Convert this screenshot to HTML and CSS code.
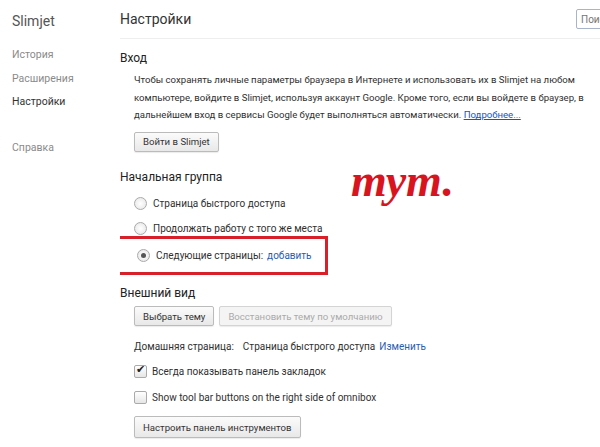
FILE: index.html
```html
<!DOCTYPE html>
<html lang="ru">
<head>
    <meta charset="UTF-8">
    <title>Настройки</title>
    <link rel="stylesheet" href="styles.css">
</head>
<body>
    <div class="page">
        <div class="sidebar">
            <div class="brand">Slimjet</div>
            <ul class="nav">
                <li>История</li>
                <li>Расширения</li>
                <li class="active">Настройки</li>
                <li class="help">Справка</li>
            </ul>
        </div>

        <div class="main">
            <div class="header">
                <h1>Настройки</h1>
                <input class="search" type="text" placeholder="Поиск настроек">
            </div>

            <div class="section">
                <h3>Вход</h3>
                <div class="body">
                    <p class="intro">Чтобы сохранять личные параметры браузера в Интернете и использовать их в Slimjet на любом компьютере, войдите в Slimjet, используя аккаунт Google. Кроме того, если вы войдете в браузер, в дальнейшем вход в сервисы Google будет выполняться автоматически. <a href="#" class="link">Подробнее...</a></p>
                    <button>Войти в Slimjet</button>
                </div>
            </div>

            <div class="section startup">
                <h3>Начальная группа</h3>
                <div class="body">
                    <label class="opt"><span class="radio"></span>Страница быстрого доступа</label>
                    <label class="opt"><span class="radio"></span>Продолжать работу с того же места</label>
                    <label class="opt marked"><span class="radio on"></span>Следующие страницы: <a href="#" class="action">добавить</a></label>
                </div>
                <div class="note">тут.</div>
            </div>

            <div class="section">
                <h3>Внешний вид</h3>
                <div class="body">
                    <div class="buttons">
                        <button>Выбрать тему</button>
                        <button disabled>Восстановить тему по умолчанию</button>
                    </div>
                    <div class="home">
                        <span>Домашняя страница:</span>
                        <span class="home-value">Страница быстрого доступа</span>
                        <a href="#" class="action">Изменить</a>
                    </div>
                    <label class="opt check-row"><span class="check on"></span>Всегда показывать панель закладок</label>
                    <label class="opt check-row"><span class="check"></span>Show tool bar buttons on the right side of omnibox</label>
                    <button class="tools">Настроить панель инструментов</button>
                </div>
            </div>
        </div>
    </div>
</body>
</html>
```

FILE: styles.css
```css
body {
    margin: 0;
    font-family: Roboto, "Noto Sans", sans-serif;
    font-size: 10px;
    color: #303030;
    background: #fff;
    overflow: hidden;
}
.page {
    display: flex;
    height: 447px;
}
.sidebar {
    width: 120px;
    flex-shrink: 0;
    padding-left: 12px;
    box-sizing: border-box;
}
.brand {
    font-size: 14px;
    color: #555;
    padding-top: 13px;
    height: 30px;
}
.nav {
    list-style: none;
    margin: 0;
    padding: 0;
}
.nav li {
    color: #8a8a8a;
    height: 23.5px;
    line-height: 23px;
    font-size: 10.5px;
}
.nav li.active { color: #333; }
.nav li.help { margin-top: 22px; }
.main {
    flex: 1;
    min-width: 0;
    overflow: hidden;
}
.header {
    display: flex;
    justify-content: space-between;
    align-items: center;
    height: 38px;
    border-bottom: 1px solid #eee;
}
h1 {
    margin: 0;
    font-size: 14px;
    font-weight: normal;
    color: #333;
}
.search {
    width: 120px;
    margin-right: -96px;
    height: 20px;
    box-sizing: border-box;
    border: 1px solid #aab4c8;
    border-radius: 2px;
    font: inherit;
    padding: 0 4px;
    color: #999;
}
.section {
    position: relative;
    padding-top: 12px;
}
h3 {
    margin: 0;
    font-size: 12px;
    font-weight: normal;
    color: #222;
}
.body {
    padding-left: 14px;
}
.intro {
    margin: 6px 0 8px;
    line-height: 17.5px;
    width: 452px;
    font-size: 9.6px;
}
.link { color: #15c; }
.action {
    color: #2a5db0;
    text-decoration: none;
    margin-left: 4px;
}
button {
    font: inherit;
    font-size: 9.6px;
    color: #333;
    background: linear-gradient(#fbfbfb, #e8e8e8);
    border: 1px solid #bbb;
    border-radius: 2px;
    height: 20px;
    padding: 0 8px;
    box-shadow: 0 1px 1px rgba(0,0,0,0.08);
}
button:disabled {
    color: #aaa;
    border-color: #d4d4d4;
    background: #f4f4f4;
}
.opt {
    display: flex;
    align-items: center;
    height: 25px;
}
.radio {
    width: 11px;
    height: 11px;
    border: 1px solid #aaa;
    border-radius: 50%;
    background: radial-gradient(#fff, #e4e4e4);
    margin: 0 6px 0 0;
    position: relative;
}
.radio.on::after {
    content: "";
    position: absolute;
    left: 3px;
    top: 3px;
    width: 5px;
    height: 5px;
    border-radius: 50%;
    background: #555;
}
.startup { padding-top: 18.5px; }
.startup h3 { margin-bottom: 7px; }
.marked {
    box-sizing: border-box;
    margin-left: -24px;
    padding-left: 24px;
    width: 218px;
    height: 39px;
    border: 3px solid #d8202a;
    margin-top: -5px;
    margin-bottom: -1px;
}
.note {
    position: absolute;
    left: 231px;
    top: 2px;
    font-family: "Liberation Serif", serif;
    font-style: italic;
    font-weight: bold;
    font-size: 46px;
    color: #d8141e;
}
.buttons {
    display: flex;
    gap: 5px;
    margin-top: 6px;
}
.home {
    margin: 15px 0 6px;
    display: flex;
}
.home-value { margin-left: 9px; }
.check {
    width: 11px;
    height: 11px;
    border: 1px solid #aaa;
    border-radius: 2px;
    background: linear-gradient(#fff, #e6e6e6);
    margin-right: 5px;
    position: relative;
}
.check.on::after {
    content: "\2714";
    position: absolute;
    left: 1px;
    top: -3px;
    font-size: 11px;
    color: #222;
}
.check-row { height: 26px; }
.tools { margin-top: 6px; height: 22px; }
```
